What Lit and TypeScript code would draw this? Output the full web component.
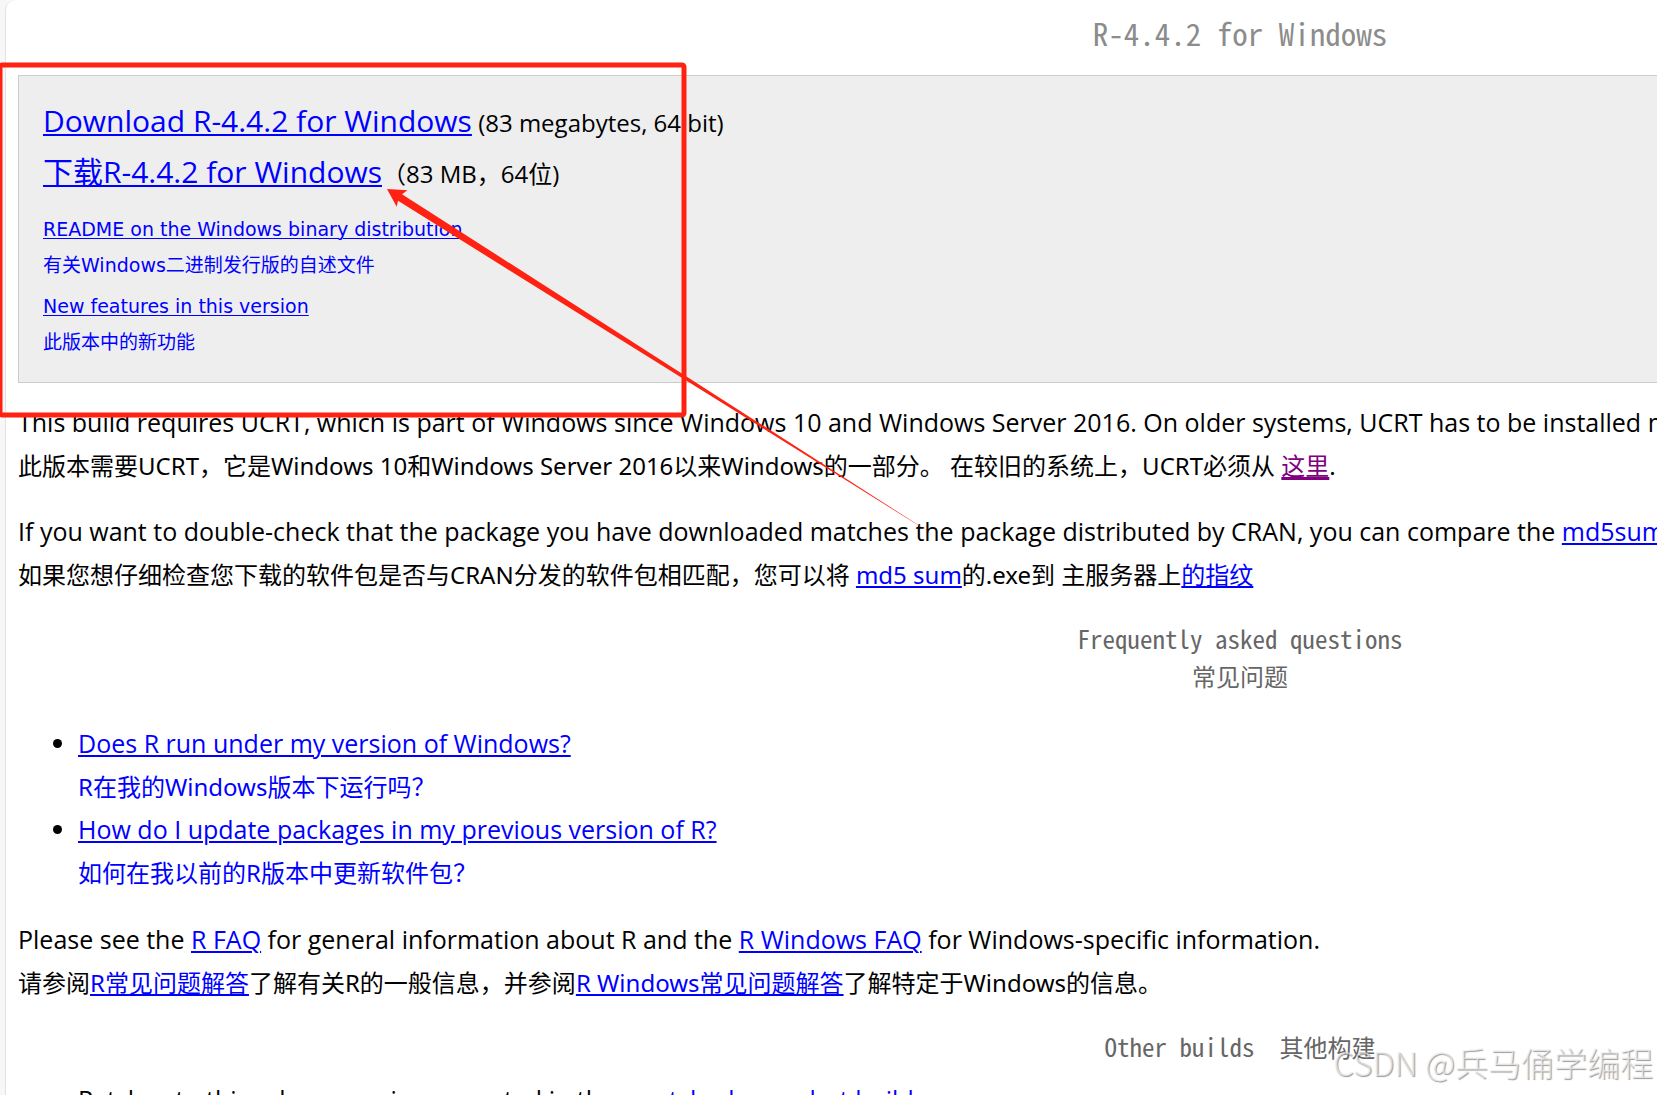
import { LitElement, html, css } from "lit";
import { customElement } from "lit/decorators.js";

@customElement("app-root")
export class AppRoot extends LitElement {
  static styles = css`
    :host {
      display: block;
      position: relative;
      height: 100vh;
      overflow: hidden;
      box-sizing: border-box;
      padding-left: 5px;
      background: #f7f7f7;
      color: #000;
      font-family: "Open Sans", "Noto Sans CJK SC", sans-serif;
      font-size: 25px;
      line-height: 43px;
    }
    .sheet {
      box-sizing: border-box;
      width: 149vw;
      min-height: 100vh;
      padding: 10px 12px 0;
      background: #fff;
      border-left: 1px solid #e2e2e2;
      border-top-left-radius: 10px;
    }
    a {
      color: #00f;
      text-decoration-thickness: 2px;
      text-underline-offset: 2px;
    }
    a.visited {
      color: #800080;
      text-decoration-thickness: 3px;
    }
    h1,
    h2 {
      margin: 0;
      text-align: center;
      font-family: "Noto Sans Mono CJK SC", "Noto Sans CJK SC", monospace;
      font-weight: 400;
    }
    h1 {
      margin-bottom: 20px;
      color: #8c8c8c;
      font-size: 31px;
      line-height: 45px;
    }
    h2 {
      margin: 22px 0 12px;
      color: #666;
      font-size: 25px;
      line-height: 38px;
    }
    h2.bilingual {
      margin-bottom: 27px;
    }
    .zh {
      display: block;
      font-family: "Noto Sans", "Noto Sans CJK SC", sans-serif;
      font-size: 24px;
    }
    h2 .zh,
    h2 .inline {
      font-family: inherit;
      font-size: 24px;
      font-weight: 500;
    }
    .download {
      padding: 20px 24px 22px;
      border: 1px solid #ccc;
      background: #eee;
    }
    .main {
      margin-bottom: 13px;
      font-size: 24px;
      line-height: 49px;
    }
    .main a {
      font-size: 30px;
    }
    .notes {
      display: flex;
      flex-direction: column;
      gap: 5px;
      font-family: "DejaVu Sans", "Noto Sans CJK SC", sans-serif;
      font-size: 19px;
      line-height: 36px;
    }
    .notes a {
      text-decoration-thickness: 1px;
    }
    .notes .zh {
      color: #00f;
      font-family: inherit;
      font-size: 19px;
    }
    p {
      margin: 0 0 23px;
    }
    .download + p {
      margin-top: 18px;
    }
    ul {
      margin: 0 0 24px;
      padding-left: 60px;
    }
    li .zh {
      color: #00f;
    }
    .marks {
      position: absolute;
      left: 0;
      top: 0;
      width: 940px;
      height: 540px;
      pointer-events: none;
    }
    .watermark {
      position: absolute;
      right: 4px;
      bottom: 9px;
      color: rgba(240, 240, 240, 0.7);
      font-family: "Noto Sans CJK SC", sans-serif;
      font-size: 33px;
      font-weight: 300;
      line-height: 48px;
      text-shadow: 1px 1px 1px rgba(0, 0, 0, 0.4);
      pointer-events: none;
    }
  `;

  render() {
    return html`
      <main class="sheet">
        <h1>R-4.4.2 for Windows</h1>
        <section class="download">
          <div class="main">
            <div><a href="#exe">Download R-4.4.2 for Windows</a> (83 megabytes, 64 bit)</div>
            <div><a href="#exe">下载R-4.4.2 for Windows</a>（83 MB，64位)</div>
          </div>
          <div class="notes">
            <div>
              <a href="#readme">README on the Windows binary distribution</a>
              <span class="zh">有关Windows二进制发行版的自述文件</span>
            </div>
            <div>
              <a href="#news">New features in this version</a>
              <span class="zh">此版本中的新功能</span>
            </div>
          </div>
        </section>
        <p>
          This build requires UCRT, which is part of Windows since Windows 10 and Windows Server
          2016. On older systems, UCRT has to be installed manually from
          <a class="visited" href="#ucrt">here</a>.
          <span class="zh"
            >此版本需要UCRT，它是Windows 10和Windows Server 2016以来Windows的一部分。
            在较旧的系统上，UCRT必须从 <a class="visited" href="#ucrt">这里</a>.</span
          >
        </p>
        <p>
          If you want to double-check that the package you have downloaded matches the package
          distributed by CRAN, you can compare the <a href="#md5">md5sum</a> of the .exe to the
          <a href="#fingerprint">fingerprint</a> on the master server.
          <span class="zh"
            >如果您想仔细检查您下载的软件包是否与CRAN分发的软件包相匹配，您可以将
            <a href="#md5">md5 sum</a>的.exe到 主服务器上<a href="#fingerprint">的指纹</a></span
          >
        </p>
        <h2 class="bilingual">Frequently asked questions<span class="zh">常见问题</span></h2>
        <ul>
          <li>
            <a href="#version">Does R run under my version of Windows?</a>
            <span class="zh">R在我的Windows版本下运行吗？</span>
          </li>
          <li>
            <a href="#update">How do I update packages in my previous version of R?</a>
            <span class="zh">如何在我以前的R版本中更新软件包？</span>
          </li>
        </ul>
        <p>
          Please see the <a href="#faq">R FAQ</a> for general information about R and the
          <a href="#winfaq">R Windows FAQ</a> for Windows-specific information.
          <span class="zh"
            >请参阅<a href="#faq">R常见问题解答</a>了解有关R的一般信息，并参阅<a href="#winfaq"
              >R Windows常见问题解答</a
            >了解特定于Windows的信息。</span
          >
        </p>
        <h2>Other builds&nbsp; <span class="inline">其他构建</span></h2>
        <ul>
          <li>
            Patches to this release are incorporated in the
            <a href="#patched">r-patched snapshot build</a>.
          </li>
        </ul>
      </main>
      <svg class="marks" viewBox="0 0 940 540" aria-hidden="true">
        <rect x="0" y="65" width="684" height="350" rx="2" fill="none" stroke="#ff2212" stroke-width="5" />
        <path
          d="M387 189 L407.5 190.3 L402 194.2 L937 537 L398 200.8 L396.7 206.8 Z"
          fill="#ff2212"
        />
      </svg>
      <div class="watermark">CSDN @兵马俑学编程</div>
    `;
  }
}
